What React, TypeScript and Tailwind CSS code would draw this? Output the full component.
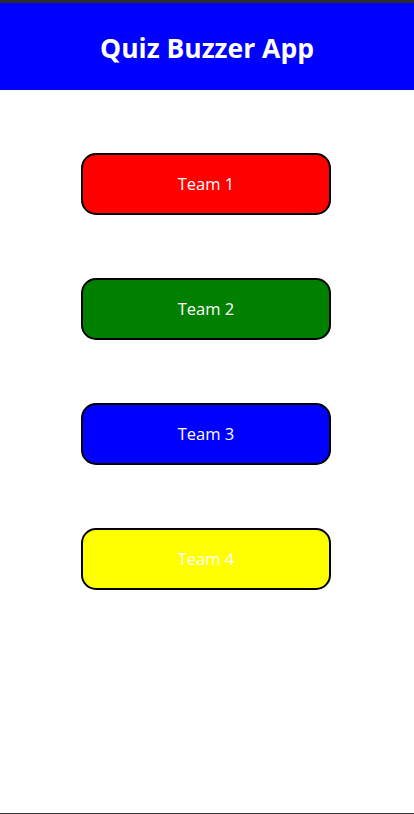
import React from "react";

const teams = [
  { name: "Team 1", color: "bg-[#ff0000]" },
  { name: "Team 2", color: "bg-[#008000]" },
  { name: "Team 3", color: "bg-[#0000ff]" },
  { name: "Team 4", color: "bg-[#ffff00]" },
];

export default function App() {
  return (
    <div className="h-[814px] flex flex-col bg-white font-['Open_Sans',sans-serif] border-t-[3px] border-t-[#2b2b2b] border-b border-b-[#333]">
      <header className="h-[87px] bg-[#0000ff] flex items-center justify-center">
        <h1 className="text-[26.5px] font-bold text-white pt-[4px]">Quiz Buzzer App</h1>
      </header>

      <div className="flex flex-col items-center gap-[63px] pt-[63px] pr-[2px]">
        {teams.map((team) => (
          <button
            key={team.name}
            className={`w-[250px] h-[62px] rounded-[15px] border-2 border-black text-white text-[16.5px] ${team.color}`}
          >
            {team.name}
          </button>
        ))}
      </div>
    </div>
  );
}
